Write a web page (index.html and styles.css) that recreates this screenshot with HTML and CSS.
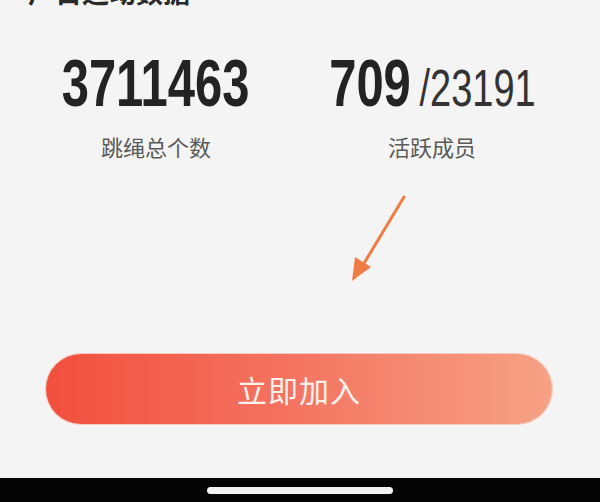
FILE: index.html
```html
<!DOCTYPE html>
<html lang="zh-CN">
<head>
    <meta charset="UTF-8">
    <meta name="viewport" content="width=device-width, initial-scale=1.0">
    <title>跳绳数据</title>
    <link rel="stylesheet" href="styles.css">
</head>
<body>
    <div class="page">
        <h2 class="section-title">户日运动数据</h2>

        <div class="stats">
            <div class="stat">
                <div class="stat-value"><span class="num">3711463</span></div>
                <div class="stat-label">跳绳总个数</div>
            </div>
            <div class="stat">
                <div class="stat-value"><span class="num">709</span><span class="total">/23191</span></div>
                <div class="stat-label">活跃成员</div>
            </div>
        </div>

        <div class="hint">
            <!-- 指向按钮的箭头 -->
            <svg width="70" height="90" viewBox="0 0 70 90">
                <line x1="55" y1="2" x2="14" y2="70" stroke="#f07c45" stroke-width="3" stroke-linecap="round"/>
                <polygon points="3,86 6,62 22,72" fill="#f07c45"/>
            </svg>
        </div>

        <div class="actions">
            <a href="#" class="btn-join">立即加入</a>
        </div>

        <div class="home-bar">
            <span class="home-indicator"></span>
        </div>
    </div>
</body>
</html>
```

FILE: styles.css
```css
* {
    margin: 0;
    padding: 0;
    box-sizing: border-box;
}

body {
    font-family: "Noto Sans CJK SC", "Liberation Sans", sans-serif;
    background: #f4f4f4;
    color: #222;
    overflow: hidden;
}

.page {
    height: 502px;
    display: flex;
    flex-direction: column;
}

.section-title {
    font-size: 27px;
    font-weight: 700;
    color: #2a2a2a;
    line-height: 30px;
    margin: -23px 0 0 28px;
}

.stats {
    display: grid;
    grid-template-columns: 276px 276px;
    padding-left: 18px;
    margin-top: 47px;
}

.stat {
    display: flex;
    flex-direction: column;
    align-items: center;
}

/* condensed look for the big counters */
.stat-value {
    display: flex;
    align-items: baseline;
    height: 58px;
    font-family: "Liberation Sans", sans-serif;
    transform: scaleX(0.73);
}

.stat-value .num {
    font-size: 67px;
    font-weight: 700;
    color: #232323;
    line-height: 58px;
}

.stat-value .total {
    font-size: 52px;
    font-weight: 400;
    color: #333;
    line-height: 58px;
    margin-left: 12px;
}

.stat-label {
    margin-top: 19px;
    font-size: 22px;
    line-height: 30px;
    color: #5a5a5a;
}

.hint {
    display: flex;
    justify-content: center;
    padding-left: 168px;
    margin-top: 34px;
    height: 92px;
}

.actions {
    padding: 0 48px 0 46px;
    margin-top: 67px;
}

.btn-join {
    display: flex;
    align-items: center;
    justify-content: center;
    height: 70px;
    border-radius: 35px;
    background: linear-gradient(90deg, #f24f3d 0%, #f3715e 45%, #f6a285 100%);
    box-shadow: 0 0 0 1px rgba(245, 160, 140, 0.5);
    color: #fdf1ec;
    font-size: 30px;
    letter-spacing: 1px;
    text-decoration: none;
}

.home-bar {
    margin-top: auto;
    height: 24px;
    background: #050505;
    display: flex;
    justify-content: center;
    align-items: flex-start;
    padding-top: 9px;
}

.home-indicator {
    width: 186px;
    height: 7px;
    border-radius: 4px;
    background: #f2f2f2;
}
```
